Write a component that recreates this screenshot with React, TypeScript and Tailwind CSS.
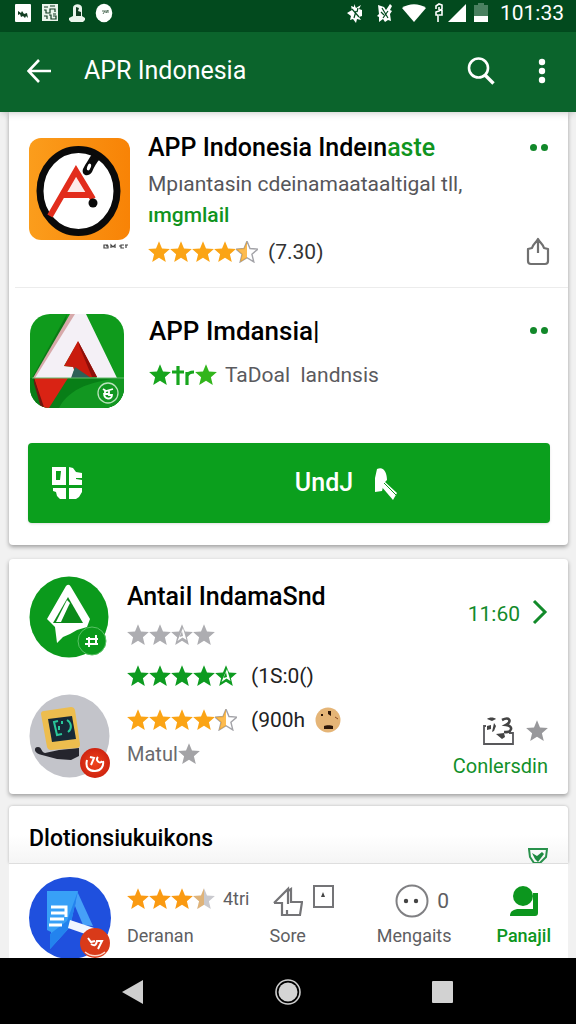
import type { ReactNode } from 'react'
import { clsx } from 'clsx'

type Fill = 'full' | 'half' | 'outline' | 'fade'

const STAR = 'M12 1.2l3 7.3 7.9.6-6 5.1 1.9 7.7L12 17.7l-6.8 4.2 1.9-7.7-6-5.1 7.9-.6z'
const HALF_STAR = 'M12 1.2v16.5l-6.8 4.2 1.9-7.7-6-5.1 7.9-.6z'

function Star({ fill = 'full', className }: { fill?: Fill; className?: string }) {
  return (
    <svg viewBox="1 1 22 22" className={clsx('w-[22px] h-[22px] shrink-0', className)}>
      {fill === 'full' && <path d={STAR} fill="currentColor" />}
      {fill === 'half' && (
        <>
          <path d={STAR} fill="#fff" stroke="#a3a3a8" strokeWidth="1.4" />
          <path d={HALF_STAR} fill="currentColor" opacity="0.75" />
        </>
      )}
      {fill === 'fade' && (
        <>
          <path d={STAR} fill="#c9c9ce" />
          <path d={HALF_STAR} fill="currentColor" opacity="0.45" />
        </>
      )}
      {fill === 'outline' && (
        <>
          <path d={STAR} fill="currentColor" />
          <path d="M13 5l3.500 12-4-2.600-5 3.500 2-5z" fill="#fff" />
          <path d="M12 8l1 5-3.500 1z" fill="currentColor" />
        </>
      )}
    </svg>
  )
}

function Stars({ fills, color }: { fills: Fill[]; color: string }) {
  return (
    <span className={clsx('flex', color)}>
      {fills.map((fill, i) => (
        <Star key={i} fill={fill} />
      ))}
    </span>
  )
}

function StatusBar() {
  return (
    <div className="h-8 bg-[#024a1e] text-white flex items-center justify-between pl-[14px] pr-3">
      <div className="flex items-center gap-[9px] pb-[6px]">
        <svg viewBox="0 0 18 20" className="w-[18px] h-5">
          <rect x="1" y="1" width="16" height="18" rx="1" fill="#fff" />
          <path d="M4 8l3 2 1-2 2 3 3-1 1 5-2-2-1 2-2-2-2 1-1-3-2 1z" fill="#123d22" />
        </svg>
        <svg viewBox="0 0 18 20" className="w-[18px] h-5">
          <rect x="1" y="1" width="16" height="17" fill="#eaf5ec" />
          <path d="M3 4h4M9 3h5M3 7h2v3h4V6h5v3M3 13h3v3M8 12h2v4h5v-3h-3M12 11h3" stroke="#123d22" strokeWidth="1.2" fill="none" />
        </svg>
        <svg viewBox="0 0 18 20" className="w-[18px] h-5">
          <path d="M5 13V5c0-5 9-5 9 0v8l3 2v2l-2 2H3l-2-2v-2z" fill="#eaf5ec" />
          <path d="M8 4v9h5V9l-3-1 1-3z" fill="#123d22" />
        </svg>
        <svg viewBox="0 0 18 20" className="w-[18px] h-5">
          <ellipse cx="9" cy="10" rx="8.300" ry="9.200" fill="#fff" />
          <path d="M7 8h3l-2 3M11 7v3l2-3v3" stroke="#57725f" fill="none" />
        </svg>
      </div>
      <div className="flex items-center gap-1 pb-[6px]">
        <svg viewBox="0 0 18 20" className="w-[18px] h-5">
          <path d="M8 1l2 4 5-3-2 4 3 1v6l-3 1 2 3-4-1-1 4-3-4-3 1 1-4-4-3 5-3-1-4 3 1z" fill="#fff" />
          <path d="M6 6l7 8M10 8l-2 7M12 5l-1 4" stroke="#024a1e" strokeWidth="1.200" />
        </svg>
        <svg viewBox="0 0 18 20" className="w-[18px] h-5 ml-2">
          <path d="M2 2l6 2 2 3 4-6 2 2-2 4 2 1-2 3 1 7-3-1-3 2-2-3-4 3V14l-2-1 2-2z" fill="#fff" />
          <path d="M6 5l6 10M12 8l-5 7M5 9l3 3" stroke="#024a1e" strokeWidth="1.200" />
        </svg>
        <svg viewBox="0 0 24 20" className="w-6 h-5 ml-1">
          <path d="M0 5c7-5 17-5 24 0L12 19z" fill="#fff" />
        </svg>
        <svg viewBox="0 0 10 20" className="w-[10px] h-5 ml-1">
          <path d="M2 6V3l3-2 3 1v4L5 8l-3 1v3h2v7M5 4v3M5 12h3V7" stroke="#fff" strokeWidth="1.600" fill="none" />
        </svg>
        <svg viewBox="0 0 18 20" className="w-[18px] h-5">
          <path d="M18 1v18H0z" fill="#fff" />
        </svg>
        <svg viewBox="0 0 14 20" className="w-[14px] h-5 ml-1">
          <path d="M0 2h4V0h6v2h4v12H0z" fill="#4a8060" />
          <path d="M0 13h14v6H0z" fill="#fff" />
        </svg>
        <span className="text-[21px] leading-6 ml-2">101:33</span>
      </div>
    </div>
  )
}

function TopBar() {
  return (
    <header className="relative z-10 h-20 bg-[#0b642c] text-white flex items-center pl-[27px] pr-[22px] pb-[2px] shadow-md">
      <button aria-label="Back">
        <svg viewBox="0 0 24 24" className="w-6 h-6" fill="none" stroke="currentColor" strokeWidth="2.600">
          <path d="M24 12H2M12 1L1.500 12 12 23" />
        </svg>
      </button>
      <h1 className="ml-[33px] flex-1 text-[25px] leading-8">APR Indonesia</h1>
      <button aria-label="Search">
        <svg viewBox="0 0 28 28" className="w-7 h-7" fill="none" stroke="currentColor" strokeWidth="2.600">
          <circle cx="11.500" cy="11" r="9.500" />
          <path d="M18 18l8.500 8.500" strokeWidth="3.400" />
        </svg>
      </button>
      <button aria-label="More options" className="ml-[35px]">
        <svg viewBox="0 0 24 28" className="w-6 h-7" fill="currentColor">
          <circle cx="12" cy="5" r="3.200" />
          <circle cx="12" cy="14" r="3.200" />
          <circle cx="12" cy="23" r="3.200" />
        </svg>
      </button>
    </header>
  )
}

function Card({ className, children }: { className?: string; children: ReactNode }) {
  return (
    <section className={clsx('mx-2 ml-[9px] bg-white shadow-[0_2px_4px_rgba(0,0,0,0.35)]', className)}>
      {children}
    </section>
  )
}

function Dots() {
  return (
    <button aria-label="More" className="flex gap-1 py-2 px-[2px]">
      <span className="w-[7px] h-[7px] rounded-full bg-[#12882a]" />
      <span className="w-[7px] h-[7px] rounded-full bg-[#12882a]" />
    </button>
  )
}

function OrangeLogo() {
  return (
    <svg viewBox="0 0 102 112" className="w-[102px] h-28 shrink-0">
      <defs>
        <linearGradient id="orange" x1="0" x2="1">
          <stop offset="0" stopColor="#fb9d1c" />
          <stop offset="1" stopColor="#f88306" />
        </linearGradient>
      </defs>
      <rect x="1" y="1" width="101" height="102" rx="12" fill="url(#orange)" />
      <ellipse cx="50.500" cy="54" rx="38.500" ry="41.500" fill="#fff" stroke="#0a0a0a" strokeWidth="7" />
      <path d="M36 58L48 34l11 24z" fill="#fdeae8" />
      <path d="M22 79L48 34l17 28M34 58h28" fill="none" stroke="#e22d1c" strokeWidth="6" />
      <circle cx="65" cy="66" r="4.500" fill="#0a0a0a" />
      <path d="M64 17c-3 5-6 9-9 15-2 6 5 9 9 3 2-5 5-10 8-13z" fill="#0a0a0a" />
      <ellipse cx="61" cy="30" rx="1.800" ry="3.500" fill="#fff" transform="rotate(20 61 30)" />
      <path d="M80 108h-4v3h4v-2h-2M83 111v-3l2 2 2-2v3M91 109h2m3-1h-3v3h3M98 108v3m-1-3h3" stroke="#444" strokeWidth="1.200" fill="none" />
    </svg>
  )
}

function GreenLogo() {
  return (
    <svg viewBox="0 0 96 94" className="w-24 h-[94px] shrink-0">
      <clipPath id="tile">
        <rect x="1" y="0" width="94" height="94" rx="20" />
      </clipPath>
      <g clipPath="url(#tile)">
        <path d="M0 0h96v94H0z" fill="#0f9b1c" />
        <path d="M0 64h96v30H0z" fill="#087e17" />
        <path d="M30 94c10-20 35-28 66-30v30z" fill="#129721" />
        <path d="M38 0L3 64l12 30 10-20z" fill="#07580f" opacity="0.5" />
        <path d="M41 0L4 64h6L47 0z" fill="#d7a9aa" />
        <path d="M46 0h11l31 64H68L49 28 35 52l11 1-3 11H6z" fill="#f4f0f6" />
        <path d="M49 27L35 52l9 1 4 11 20-1z" fill="#c91b0e" />
        <path d="M51 34L63 63h5L49 27z" fill="#8e0f0a" />
        <path d="M46 53l16 11H42z" fill="#2d6158" />
        <path d="M5 64h34L20 94H14z" fill="#d92314" />
        <path d="M5 64l10 29-3 1-7-25z" fill="#6d1710" />
        <path d="M3 64h93" stroke="#65bc6d" />
      </g>
      <circle cx="79" cy="79" r="10" fill="none" stroke="#b9e3bb" strokeWidth="1.300" />
      <path d="M74 75l3 2 7-2M75 79c0 7 8 7 8 2h-3v-4M76 77v3h4" fill="none" stroke="#fff" strokeWidth="1.800" />
    </svg>
  )
}

function ArrowLogo() {
  return (
    <svg viewBox="0 0 80 82" className="w-20 h-[82px]">
      <ellipse cx="40" cy="41" rx="39.500" ry="40.500" fill="#0b9a1c" />
      <path d="M37 10q3-3 5 1l19 32-3 8-10 3-7 4-7 3-6 6-2-16-8-8z" fill="#fff" />
      <path d="M39 21l15 26H24z" fill="#0b8a1a" />
      <path d="M38 24l3 3-2 4-7 15h-5l9-18z" fill="#fff" />
      <circle cx="63" cy="65" r="14" fill="#0b9a1c" stroke="#5ac266" />
      <path d="M60 61v10M67 59v10M57 63h12M56 68h13" stroke="#fff" strokeWidth="2" />
    </svg>
  )
}

function MonitorLogo() {
  return (
    <svg viewBox="0 0 82 84" className="w-[82px] h-[84px]">
      <defs>
        <radialGradient id="ember">
          <stop offset="0" stopColor="#f0441c" />
          <stop offset="1" stopColor="#cf2410" />
        </radialGradient>
      </defs>
      <ellipse cx="40.500" cy="42" rx="40" ry="41.500" fill="#c3c4ca" />
      <path d="M9 53c4 0 3 5 7 6l14-3 20-2v8l-8 4-14-1-15-4c-8-1-9-8-4-8z" fill="#25252d" />
      <path d="M12 20q0-3 3-3l27-4q3 0 4 3l5 34q0 4-3 4l-26 2q-3 0-4-3z" fill="#edbd4e" />
      <path d="M19 25l24-3 4 23-24 3z" fill="#172936" />
      <path d="M29 27l-4 1 3 13 5-1M30 32v4M38 26c5 3 5 9 1 12M33 27v3" fill="none" stroke="#29c99b" strokeWidth="2" />
      <circle cx="66" cy="69" r="15" fill="url(#ember)" />
      <path d="M58 66c-2 8 2 11 8 11s9-5 8-10M61 63l4 1-3 7M69 63c-3 3 2 8 4 4" fill="none" stroke="#fff" strokeWidth="2" />
    </svg>
  )
}

function BlueLogo() {
  return (
    <svg viewBox="0 0 82 84" className="w-[82px] h-[84px] shrink-0">
      <circle cx="41" cy="42" r="41" fill="#1f50de" />
      <path d="M48 15l16 35-10-1-8-19z" fill="#46a0f8" />
      <path d="M18 15h31l-8 36-20 22 1-17-4-2z" fill="#38a0f7" />
      <path d="M49 15L41 51 21 73V58l17-13z" fill="#2383ee" />
      <path d="M22 31h15v5M22 37h14M21 43h14M20 49h13M37 34v7" stroke="#fff" strokeWidth="3" fill="none" />
      <path d="M41 44l24 8-3 8-23-8z" fill="#f2f7ff" />
      <circle cx="66" cy="67" r="15" fill="#d93a19" />
      <path d="M59 62l3 4 4-1M62 68c3 2 5 2 6-3h5l-4 8" stroke="#fff" strokeWidth="2" fill="none" />
      <path d="M56 76c6 5 14 5 20 0" stroke="#ffd8cc" strokeWidth="1.500" fill="none" />
    </svg>
  )
}

function FeaturedCard() {
  return (
    <Card className="rounded-b pb-[22px]">
      <article className="flex pt-[21px] pl-[19px] pr-[18px] h-[175px] pb-5">
        <div className="pt-1">
          <OrangeLogo />
        </div>
        <div className="flex-1 min-w-0 ml-[18px] whitespace-nowrap">
          <h2 className="text-[25px] leading-[30px] font-medium text-black">
            APP Indonesia Indeın<span className="text-[#0f9420]">aste</span>
          </h2>
          <p className="mt-1 text-[21px] leading-[34px] text-[#56565a]">Mpıantasin cdeinamaataaltigal tll,</p>
          <p className="text-[21px] leading-[28px] font-medium text-[#109320]">ımgmlail</p>
          <div className="mt-2 flex items-center gap-[10px]">
            <Stars fills={['full', 'full', 'full', 'full', 'half']} color="text-[#fba415]" />
            <span className="text-[21px] leading-[30px] text-[#333]">(7.30)</span>
          </div>
        </div>
        <div className="flex flex-col items-end justify-between pt-[3px]">
          <Dots />
          <button aria-label="Share">
            <svg viewBox="0 0 24 30" className="w-6 h-[30px]" fill="none" stroke="#707070" strokeWidth="2.200">
              <path d="M12 4v12M6 11c1-4 4-5 6-9 2 4 5 5 6 9l4 1v12q0 3-3 3H5q-3 0-3-3V12z" strokeLinejoin="round" />
            </svg>
          </button>
        </div>
      </article>
      <hr className="ml-[6px] border-[#ececec]" />

      <article className="flex pt-[26px] pl-[20px] pr-[18px] pb-[35px]">
        <GreenLogo />
        <div className="flex-1 min-w-0 ml-6 whitespace-nowrap">
          <h2 className="mt-[2px] text-[26px] leading-[30px] font-medium text-black">APP Imdansia|</h2>
          <div className="mt-[14px] flex items-center text-[#17a51d]">
            <Star />
            <svg viewBox="0 0 24 22" className="w-6 h-[22px]" fill="none" stroke="currentColor" strokeWidth="3.200">
              <path d="M7 2v19M1 8h12M16 21V8M16 12c1-3 3-4 7-4" />
            </svg>
            <Star className="text-[#32b51c]" />
            <span className="ml-2 text-[21px] leading-[30px] text-[#5a5a5e]">TaDoal&nbsp; landnsis</span>
          </div>
        </div>
        <div className="pt-[5px]">
          <Dots />
        </div>
      </article>

      <div className="pl-[19px] pr-[18px]">
        <button className="w-full h-20 rounded bg-[#0b9f1d] text-white flex items-center shadow-sm">
          <svg viewBox="0 0 32 34" className="w-8 h-[34px] ml-6" fill="currentColor">
            <path d="M0 1h14v18H0zM4 5v9h4l1-9z" fillRule="evenodd" />
            <path d="M17 1l4 1 3 4 6 1v5h-6v1l6 1v5H17zM1 22h13v11H8l-3-3-1-4-3-1zM17 22h13v4l-3 5-3 2h-7z" />
          </svg>
          <span className="flex-1 flex items-center justify-center gap-5 pl-[60px]">
            <span className="text-[25px] leading-8 font-medium">UndJ</span>
            <svg viewBox="0 0 26 34" className="w-[26px] h-[34px]" fill="currentColor">
              <path d="M4 3c7-3 10 4 10 11l-3 3-2 8-7 1V12z" />
              <path d="M11 15l13 12-4 7L8 20z" />
              <path d="M11 17l13 13" stroke="#0b9f1d" />
            </svg>
          </span>
        </button>
      </div>
    </Card>
  )
}

function ListCard() {
  return (
    <Card className="mt-[14px] rounded flex h-[235px] pl-5 pr-5 pt-[17px]">
      <div className="w-[82px] shrink-0 flex flex-col gap-9">
        <ArrowLogo />
        <MonitorLogo />
      </div>
      <div className="ml-4 flex-1 min-w-0 whitespace-nowrap">
        <h2 className="mt-[5px] text-[25px] leading-8 font-medium text-black">AntaiI IndamaSnd</h2>
        <div className="mt-[11px]">
          <Stars fills={['full', 'full', 'outline', 'full']} color="text-[#adadb1]" />
        </div>
        <div className="mt-[15px] flex items-center gap-[14px]">
          <Stars fills={['full', 'full', 'full', 'full', 'outline']} color="text-[#0d9b20]" />
          <span className="text-[21px] leading-[30px] text-[#222]">(1S:0()</span>
        </div>
        <div className="mt-[14px] flex items-center gap-[14px]">
          <Stars fills={['full', 'full', 'full', 'full', 'half']} color="text-[#fba415]" />
          <span className="text-[21px] leading-[30px] text-[#222]">(900h</span>
          <svg viewBox="0 0 26 26" className="w-[26px] h-[26px] -ml-1">
            <circle cx="13" cy="13" r="12.500" fill="#e5b577" />
            <path d="M13 4h3v5l-3-2zM6 7h2v2H6zM9 19c2-1 7-1 9 0v3H9z" fill="#2c1608" />
            <path d="M20 10l3 2" stroke="#8a4a25" />
          </svg>
        </div>
        <div className="mt-[5px] flex items-center text-[#a3a3a6]">
          <span className="text-[20px] leading-7 text-[#6a6a6e]">Matul</span>
          <Star />
        </div>
      </div>
      <div className="flex flex-col items-end pt-[23px]">
        <a href="#detail" className="flex items-center gap-3 text-[#128a2a]">
          <span className="text-[21px] leading-[30px]">11:60</span>
          <svg viewBox="0 0 16 26" className="w-4 h-[26px] mb-1" fill="none" stroke="currentColor" strokeWidth="3">
            <path d="M2 2l11 11L2 24" />
          </svg>
        </a>
        <div className="mt-[87px] flex items-center gap-3 text-[#98989b]">
          <svg viewBox="0 0 32 30" className="w-8 h-[30px]">
            <path d="M4 10H2v18h29V17h-4" fill="none" stroke="#58585b" strokeWidth="1.800" />
            <path d="M5 3c2-2 7-2 9 0l-4 2zM5 10l4-1v4l-4 1zM12 7l2 3-2 5-2 1M14 18l8-1 1 4-3 2z" fill="#444" />
            <path d="M20 4c8-4 10 2 4 5 8 1 6 8-2 7" fill="none" stroke="#444" strokeWidth="2.600" />
          </svg>
          <Star />
        </div>
        <a href="#conlersdin" className="mt-1 text-[20px] leading-8 text-[#12902a]">
          Conlersdin
        </a>
      </div>
    </Card>
  )
}

function BottomTabs() {
  return (
    <nav className="mr-2 ml-[9px] h-[95px] bg-white border-t border-[#dedede] overflow-hidden flex pl-5 pr-[17px] pt-3 text-[18px] leading-6 text-[#5e5e62] whitespace-nowrap">
      <BlueLogo />
      <button className="ml-4 flex flex-col items-start pt-3 h-[78px]">
        <span className="flex items-center gap-2 h-6 pb-[2px]">
          <Stars fills={['full', 'full', 'full', 'fade']} color="text-[#fa9a12]" />
          4tri
        </span>
        <span className="mt-3">Deranan</span>
      </button>
      <button className="ml-5 flex flex-col items-start pt-[9px] h-[78px]">
        <span className="flex items-center gap-[10px] h-8 pl-1">
          <svg viewBox="0 0 30 32" className="w-[30px] h-8" fill="none" stroke="#747477" strokeWidth="2.200">
            <path d="M1 18L15 4v15M15 6l3-2v13h11l-2 13H9V18H1M14 25v4" />
          </svg>
          <svg viewBox="0 0 22 24" className="w-[22px] h-6 mb-2" fill="none" stroke="#747477" strokeWidth="2">
            <rect x="1" y="1" width="19" height="21" />
            <path d="M10 7l2 5H8z" fill="#444" stroke="none" />
          </svg>
        </span>
        <span className="mt-[7px]">Sore</span>
      </button>
      <button className="ml-auto flex flex-col items-center pt-[9px] h-[78px]">
        <span className="flex items-center gap-2 h-8 pl-4">
          <svg viewBox="0 0 34 34" className="w-[34px] h-[34px]" fill="none" stroke="#808083" strokeWidth="2">
            <circle cx="17" cy="17" r="15.500" />
            <circle cx="11" cy="17" r="2.200" fill="#444" stroke="none" />
            <circle cx="21" cy="17" r="2.200" fill="#444" stroke="none" />
          </svg>
          <span className="text-[21px]">0</span>
        </span>
        <span className="mt-[7px]">Mengaits</span>
      </button>
      <button className="ml-[45px] flex flex-col items-center pt-[9px] h-[78px] font-medium text-[#0c961e]">
        <svg viewBox="0 0 30 32" className="w-[30px] h-8" fill="currentColor">
          <circle cx="14" cy="11" r="10" />
          <path d="M1 31c0-5 4-7 9-7h14V8h5v20q0 3-3 3z" />
        </svg>
        <span className="mt-[7px]">Panajil</span>
      </button>
    </nav>
  )
}

function SystemNav() {
  return (
    <div className="h-[67px] bg-black grid grid-cols-3 items-center px-14">
      <button aria-label="Back" className="justify-self-center">
        <svg viewBox="0 0 22 26" className="w-[22px] h-[26px]">
          <path d="M21 1v24L0 13z" fill="#cecece" />
        </svg>
      </button>
      <button aria-label="Home" className="justify-self-center">
        <svg viewBox="0 0 28 28" className="w-7 h-7">
          <circle cx="14" cy="14" r="12" fill="none" stroke="#cecece" strokeWidth="1.600" />
          <circle cx="14" cy="14" r="9.500" fill="#d4d4d4" />
        </svg>
      </button>
      <button aria-label="Recents" className="justify-self-center">
        <span className="block w-[21px] h-[22px] rounded-[1px] bg-[#d2d2d2]" />
      </button>
    </div>
  )
}

export default function App() {
  return (
    <div className="min-h-screen flex flex-col bg-[#f1f1f1] font-['Roboto',sans-serif]">
      <StatusBar />
      <TopBar />
      <main className="flex-1">
        <FeaturedCard />
        <ListCard />
        <section className="mt-3 mr-2 ml-[9px] h-[57px] rounded-t bg-linear-to-b from-white from-50% to-[#f5f5f5] shadow-[0_0_3px_rgba(0,0,0,0.25)] flex items-center justify-between px-5">
          <h2 className="text-[23px] leading-8 pt-2 font-medium text-black">Dlotionsiukuikons</h2>
          <svg viewBox="0 0 20 16" className="w-5 h-4 self-end" fill="none" stroke="#28914b" strokeWidth="2">
            <path d="M1 2h18l-1 8-6 6H6L2 10z" />
            <path d="M4 6l5 3 5-4 2 2-6 8-3-3z" fill="#1d8a40" stroke="none" />
          </svg>
        </section>
      </main>
      <BottomTabs />
      <SystemNav />
    </div>
  )
}
